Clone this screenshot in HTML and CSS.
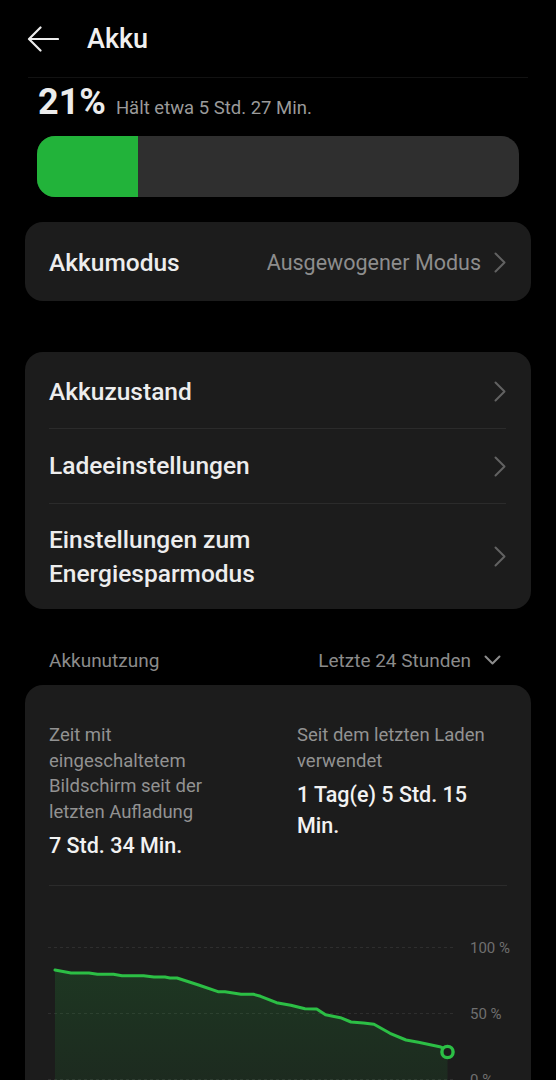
FILE: index.html
```html
<!DOCTYPE html>
<html lang="de">
<head>
<meta charset="utf-8">
<title>Akku</title>
<link rel="stylesheet" href="styles.css">
</head>
<body>
<header class="topbar">
  <svg class="back" width="32" height="26" viewBox="0 0 32 26"><path d="M31 13H2.5M13.5 1.5L2 13l11.5 11.5" fill="none" stroke="#ececec" stroke-width="2.2" stroke-linecap="round" stroke-linejoin="round"/></svg>
  <h1 class="title">Akku</h1>
</header>
<div class="topline"></div>

<div class="pct-row">
  <span class="pct">21%</span>
  <span class="pct-sub">Hält etwa 5 Std. 27 Min.</span>
</div>
<div class="bar"><div class="bar-fill" style="width:101px"></div></div>

<section class="card">
  <div class="row row-single">
    <span class="row-label">Akkumodus</span>
    <span class="row-value">Ausgewogener Modus</span>
    <svg class="chev" width="12" height="21" viewBox="0 0 12 21"><path d="M1.5 1.5l9 9-9 9" fill="none" stroke="#626262" stroke-width="2" stroke-linecap="round" stroke-linejoin="round"/></svg>
  </div>
</section>

<section class="card card-list">
  <div class="row row-a">
    <span class="row-label">Akkuzustand</span>
    <svg class="chev" width="12" height="21" viewBox="0 0 12 21"><path d="M1.5 1.5l9 9-9 9" fill="none" stroke="#626262" stroke-width="2" stroke-linecap="round" stroke-linejoin="round"/></svg>
  </div>
  <div class="row row-b">
    <span class="row-label">Ladeeinstellungen</span>
    <svg class="chev" width="12" height="21" viewBox="0 0 12 21"><path d="M1.5 1.5l9 9-9 9" fill="none" stroke="#626262" stroke-width="2" stroke-linecap="round" stroke-linejoin="round"/></svg>
  </div>
  <div class="row row-c">
    <span class="row-label two-line">Einstellungen zum<br>Energiesparmodus</span>
    <svg class="chev" width="12" height="21" viewBox="0 0 12 21"><path d="M1.5 1.5l9 9-9 9" fill="none" stroke="#626262" stroke-width="2" stroke-linecap="round" stroke-linejoin="round"/></svg>
  </div>
</section>

<div class="usage-head">
  <span class="usage-title">Akkunutzung</span>
  <span class="usage-range">Letzte 24 Stunden
    <svg class="chev-down" width="17" height="10" viewBox="0 0 17 10"><path d="M1.5 1.5l7 7 7-7" fill="none" stroke="#8c8c8c" stroke-width="2" stroke-linecap="round" stroke-linejoin="round"/></svg>
  </span>
</div>

<section class="card usage-card">
  <div class="stats">
    <div class="stat">
      <div class="stat-label">Zeit mit<br>eingeschaltetem<br>Bildschirm seit der<br>letzten Aufladung</div>
      <div class="stat-value">7 Std. 34 Min.</div>
    </div>
    <div class="stat">
      <div class="stat-label">Seit dem letzten Laden<br>verwendet</div>
      <div class="stat-value">1 Tag(e) 5 Std. 15<br>Min.</div>
    </div>
  </div>
  <div class="usage-divider"></div>
  <svg class="chart" width="506" height="230" viewBox="0 0 506 230">
    <defs>
      <linearGradient id="fillg" x1="0" y1="0" x2="0" y2="1">
        <stop offset="0" stop-color="#24b83e" stop-opacity="0.17"/>
        <stop offset="1" stop-color="#24b83e" stop-opacity="0.07"/>
      </linearGradient>
    </defs>
    <g stroke="#2e2e2e" stroke-width="1" stroke-dasharray="3 3">
      <line x1="23" y1="61.5" x2="431" y2="61.5"/>
      <line x1="23" y1="127.5" x2="431" y2="127.5"/>
      <line x1="23" y1="193.5" x2="431" y2="193.5"/>
    </g>
    <polygon fill="url(#fillg)" points="30,84 46,87 64,87 72.5,88.3 88.5,88.3 97,89.7 118.6,89.7 129,91 140,91 145,92 152,92 173.6,99 193,105.7 200,105.7 216,108.3 228.5,108.3 235.6,110.3 251.6,116.7 265.8,119.3 280,122.7 291.7,123 300.5,128.7 315.4,131.7 326,136 338.5,137 349,138.3 365,147.3 381,154 393.4,156.3 414.7,160.7 422.5,166 422.5,230 30,230"/>
    <polyline fill="none" stroke="#2cbf45" stroke-width="3" stroke-linejoin="round" stroke-linecap="round" points="30,84 46,87 64,87 72.5,88.3 88.5,88.3 97,89.7 118.6,89.7 129,91 140,91 145,92 152,92 173.6,99 193,105.7 200,105.7 216,108.3 228.5,108.3 235.6,110.3 251.6,116.7 265.8,119.3 280,122.7 291.7,123 300.5,128.7 315.4,131.7 326,136 338.5,137 349,138.3 365,147.3 381,154 393.4,156.3 414.7,160.7 420,163"/>
    <circle cx="422.5" cy="166" r="5.6" fill="#1c1c1c" stroke="#2cbf45" stroke-width="3.4"/>
    <g class="axis-label">
      <text x="445" y="66.5">100 %</text>
      <text x="445" y="133">50 %</text>
      <text x="445" y="199">0 %</text>
    </g>
  </svg>
</section>
</body>
</html>
```

FILE: styles.css
```css
* { box-sizing: border-box; }

html, body {
  margin: 0;
  padding: 0;
  background: #000;
}

body {
  font-family: Roboto, "Noto Sans", "Liberation Sans", sans-serif;
  color: #efefef;
  width: 556px;
  height: 1080px;
  overflow: hidden;
}

.topbar {
  height: 77px;
  display: flex;
  align-items: center;
  padding-left: 27px;
}

.back { display: block; flex: none; }

.title {
  margin: 0 0 0 28px;
  font-size: 27px;
  line-height: 32px;
  font-weight: 500;
  color: #f0f0f0;
}

.topline {
  height: 1px;
  margin: 0 28px;
  background: #121212;
}

.pct-row {
  display: flex;
  align-items: baseline;
  padding: 4px 37px 0 38px;
}

.pct {
  font-size: 36px;
  line-height: 40px;
  font-weight: 700;
  color: #ececec;
}

.pct-sub {
  margin-left: 10px;
  font-size: 18.5px;
  color: #9a9a9a;
}

.bar {
  margin: 14px 37px 0;
  height: 61px;
  border-radius: 18px;
  background: #2f2f2f;
  overflow: hidden;
}

.bar-fill {
  height: 100%;
  background: #22b33a;
}

.card {
  margin: 25px 25px 0;
  background: #1c1c1c;
  border-radius: 18px;
  padding: 0 25px 0 24px;
}

.row {
  display: flex;
  align-items: center;
}

.row-single {
  height: 79px;
  padding-top: 2px;
}

.row-label {
  flex: 1;
  font-size: 24.5px;
  font-weight: 500;
  color: #ededed;
  line-height: 34px;
}

.row-value {
  font-size: 21.5px;
  color: #8d8d8d;
  margin-right: 13px;
}

.chev { display: block; flex: none; }

.card-list { margin-top: 51px; }

.row-a {
  height: 76px;
  padding-top: 3px;
}

.row-b {
  height: 75px;
  border-top: 1px solid #2b2b2b;
}

.row-c {
  height: 106px;
  border-top: 1px solid #2b2b2b;
}

.usage-head {
  height: 76px;
  padding: 26px 55px 0 49px;
  display: flex;
  align-items: center;
  justify-content: space-between;
  font-size: 19px;
  color: #8b8b8b;
}

.usage-range {
  display: flex;
  align-items: center;
  gap: 13px;
}

.chev-down { display: block; }

.usage-card {
  margin-top: 0;
  padding: 38px 0 0;
  height: 430px;
  border-radius: 18px 18px 0 0;
}

.stats {
  display: grid;
  grid-template-columns: 248px 1fr;
  padding-left: 24px;
}

.stat-label {
  font-size: 18.5px;
  line-height: 25.5px;
  color: #929292;
}

.stat-value {
  margin-top: 5px;
  font-size: 21.5px;
  line-height: 31px;
  font-weight: 500;
  color: #f2f2f2;
}

.usage-divider {
  height: 1px;
  margin: 24px 24px 0;
  background: #2b2b2b;
}

.chart { display: block; }

.axis-label text {
  font-family: Roboto, "Noto Sans", sans-serif;
  font-size: 15px;
  fill: #6f6f6f;
}
```
